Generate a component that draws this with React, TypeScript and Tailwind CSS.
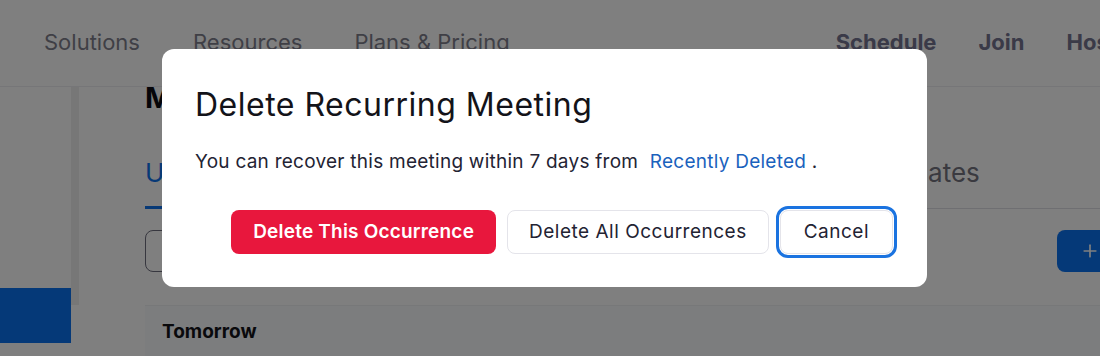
import { Plus } from 'lucide-react';

const navLeft = [
    { label: 'Solutions', ml: 'ml-[44px]' },
    { label: 'Resources', ml: 'ml-[53px]' },
    { label: 'Plans & Pricing', ml: 'ml-[52px]' },
];

const navRight = ['Schedule', 'Join', 'Host'];

const tabs = ['Previous', 'Personal Room'];

function Page() {
    return (
        <div className="h-[356px] w-[1100px] overflow-hidden bg-white text-[#232333]">
            <header className="flex h-[87px] items-start whitespace-nowrap border-b border-[#ececf0] pt-[28px] text-[22px] leading-[28px]">
                {navLeft.map(item => (
                    <a key={item.label} className={`${item.ml} text-[#7e7e8c]`}>
                        {item.label}
                    </a>
                ))}
                <nav className="ml-[326px] flex gap-[42px] font-bold text-[#747490]">
                    {navRight.map(item => (
                        <a key={item}>{item}</a>
                    ))}
                </nav>
            </header>

            <div className="flex">
                <aside className="w-[71px] shrink-0 pt-[201px]">
                    <div className="h-[55px] bg-[#0b72f0]" />
                </aside>
                <div className="h-[218px] w-[8px] shrink-0 bg-[#eeeeee]" />

                <main className="min-w-0 flex-1 pl-[66px]">
                    <h1 className="text-[29px] font-bold leading-[22px] text-[#0b0b12]">Meetings</h1>

                    <div className="mt-[48px] flex h-[52px] items-start whitespace-nowrap border-b border-[#dedee4] text-[26px] leading-[32px]">
                        <div className="border-b-[3px] border-[#0e72ed] pb-[17px] text-[#0e72ed]">Upcoming</div>
                        {tabs.map(tab => (
                            <div key={tab} className="ml-[44px] text-[#747480]">
                                {tab}
                            </div>
                        ))}
                        <div className="ml-[96px] text-[#747480]">Meeting Templates</div>
                    </div>

                    <div className="mt-[21px] flex items-center">
                        <div className="h-[42px] w-[300px] rounded-[8px] border border-[#6e6e7e]" />
                        <button className="ml-auto flex h-[42px] w-[43px] items-center rounded-l-[8px] bg-[#0b72f0] pl-[23px] text-white">
                            <Plus size={20} strokeWidth={2} className="shrink-0" />
                        </button>
                    </div>

                    <div className="mt-[33px] h-[60px] border-t border-[#eef0f3] bg-[#f8fafc] pl-[17px] pt-[15px] text-[19px] font-bold leading-[22px] text-[#131319]">
                        Tomorrow
                    </div>
                </main>
            </div>
        </div>
    );
}

export default function App() {
    return (
        <div className="relative h-[356px] w-[1100px] overflow-hidden font-['Inter',sans-serif]">
            <Page />

            {/* dim layer */}
            <div className="absolute inset-0 bg-black/50" />

            <div className="absolute inset-0 pl-[162px] pt-[49px]">
                <div className="w-[765px] rounded-[12px] bg-white pb-[33px] pl-[33px] pr-[34px] pt-[38px] text-[#232333]">
                    <h2 className="text-[32px] leading-[36px] tracking-[0.5px] text-[#131319]">Delete Recurring Meeting</h2>

                    <p className="mt-[27px] whitespace-nowrap text-[19px] leading-[24px] tracking-[0.25px] text-[#232333]">
                        You can recover this meeting within 7 days from{' '}
                        <a className="ml-[6px] text-[#1a62bd]">Recently Deleted</a> .
                    </p>

                    <div className="mt-[36px] flex justify-end gap-[11px] whitespace-nowrap text-[19px]">
                        <button className="h-[44px] rounded-[8px] bg-[#e8173d] px-[22px] font-semibold tracking-[0.2px] text-white">
                            Delete This Occurrence
                        </button>
                        <button className="h-[44px] rounded-[8px] border border-[#e4e4ea] bg-white px-[21px] tracking-[0.5px] text-[#232333]">
                            Delete All Occurrences
                        </button>
                        <button className="h-[44px] rounded-[8px] border border-[#e4e4ea] bg-white px-[23px] tracking-[0.5px] text-[#232333] outline-[3px] outline-offset-[1px] outline-[#1a73e0]">
                            Cancel
                        </button>
                    </div>
                </div>
            </div>
        </div>
    );
}
